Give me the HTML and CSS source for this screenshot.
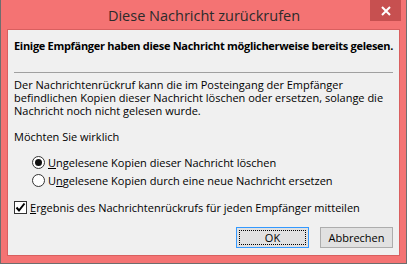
FILE: index.html
```html
<!DOCTYPE html>
<html lang="de">

<head>
    <meta charset="UTF-8">
    <title>Diese Nachricht zurückrufen</title>
    <link rel="stylesheet" href="styles.css">
</head>

<body>
    <div class="window">
        <div class="titlebar">
            <span class="title">Diese Nachricht zurückrufen</span>
            <div class="close">
                <svg width="10" height="10" viewBox="0 0 10 10">
                    <path d="M1 1L9 9M9 1L1 9" stroke="#fff" stroke-width="2" />
                </svg>
            </div>
        </div>
        <div class="client">
            <p class="warning">Einige Empfänger haben diese Nachricht möglicherweise bereits gelesen.</p>
            <div class="sep"></div>
            <p class="info">Der Nachrichtenrückruf kann die im Posteingang der Empfänger<br>befindlichen Kopien dieser Nachricht löschen oder ersetzen, solange die<br>Nachricht noch nicht gelesen wurde.</p>
            <p class="question">Möchten Sie wirklich</p>
            <div class="options">
                <div class="option">
                    <span class="radio checked"></span>
                    <span><u>U</u>ngelesene Kopien dieser Nachricht löschen</span>
                </div>
                <div class="option">
                    <span class="radio"></span>
                    <span>U<u>n</u>gelesene Kopien durch eine neue Nachricht ersetzen</span>
                </div>
            </div>
            <div class="option check-row">
                <span class="checkbox">
                    <svg width="11" height="11" viewBox="0 0 11 11">
                        <path d="M1.5 5.5L4 8.5L9.5 1.5" fill="none" stroke="#000" stroke-width="2" />
                    </svg>
                </span>
                <span><u>E</u>rgebnis des Nachrichtenrückrufs für jeden Empfänger mitteilen</span>
            </div>
            <div class="buttons">
                <div class="btn default"><span class="focus">OK</span></div>
                <div class="btn">Abbrechen</div>
            </div>
        </div>
    </div>
</body>

</html>
```

FILE: styles.css
```css
:root {
  --frame: #f47373;
  --frame-dark: #d95f5f;
  --client: #f0f0f0;
}
html,
body {
  margin: 0;
  padding: 0;
}
body {
  font-family: "Open Sans", "Noto Sans", sans-serif;
  font-size: 11px;
  color: #000;
}
.window {
  width: 407px;
  height: 264px;
  box-sizing: border-box;
  background-color: var(--frame);
  border: 1px solid #6e6e6e;
  border-top: none;
  display: flex;
  flex-direction: column;
}
.titlebar {
  height: 29px;
  display: grid;
  grid-template-columns: 1fr auto 1fr;
  align-items: start;
  padding-right: 5px;
  padding-left: 6px;
}
.titlebar .title {
  grid-column: 2;
  font-size: 14.5px;
  line-height: 31px;
  color: #2b2b2b;
}
.titlebar .close {
  grid-column: 3;
  justify-self: end;
  width: 31px;
  height: 21px;
  background-color: #c75050;
  display: flex;
  align-items: center;
  justify-content: center;
}
.client {
  flex: 1;
  margin: 0 6px 7px 6px;
  border: 1px solid var(--frame-dark);
  background-color: var(--client);
  padding: 8px 6px 0 6px;
}
.client p {
  margin: 0;
}
.warning {
  font-weight: 700;
  line-height: 15px;
  white-space: nowrap;
  letter-spacing: -0.3px;
}
.sep {
  height: 1px;
  margin: 19px 0 5px 0;
  background-color: #a0a0a0;
}
.info {
  line-height: 13px;
}
.question {
  margin-top: 13px !important;
  line-height: 13px;
}
.options {
  margin-top: 10px;
  padding-left: 18px;
}
.option {
  height: 18px;
  display: flex;
  align-items: center;
  gap: 3px;
}
.radio {
  width: 11px;
  height: 11px;
  border: 1px solid #333;
  border-radius: 50%;
  background-color: #fff;
  display: flex;
  align-items: center;
  justify-content: center;
}
.radio.checked::after {
  content: "";
  width: 7px;
  height: 7px;
  border-radius: 50%;
  background-color: #111;
}
.check-row {
  margin-top: 9px;
}
.checkbox {
  width: 11px;
  height: 11px;
  border: 1px solid #333;
  background-color: #fff;
  display: flex;
  align-items: center;
  justify-content: center;
}
.buttons {
  margin-top: 11px;
  display: flex;
  justify-content: flex-end;
  gap: 11px;
}
.btn {
  width: 73px;
  height: 21px;
  box-sizing: border-box;
  border: 1px solid #adadad;
  background-color: #e1e1e1;
  display: flex;
  align-items: center;
  justify-content: center;
}
.btn.default {
  border-color: #3399ff;
  padding: 2px;
}
.btn .focus {
  flex: 1;
  align-self: stretch;
  border: 1px dotted #000;
  display: flex;
  align-items: center;
  justify-content: center;
}
```
